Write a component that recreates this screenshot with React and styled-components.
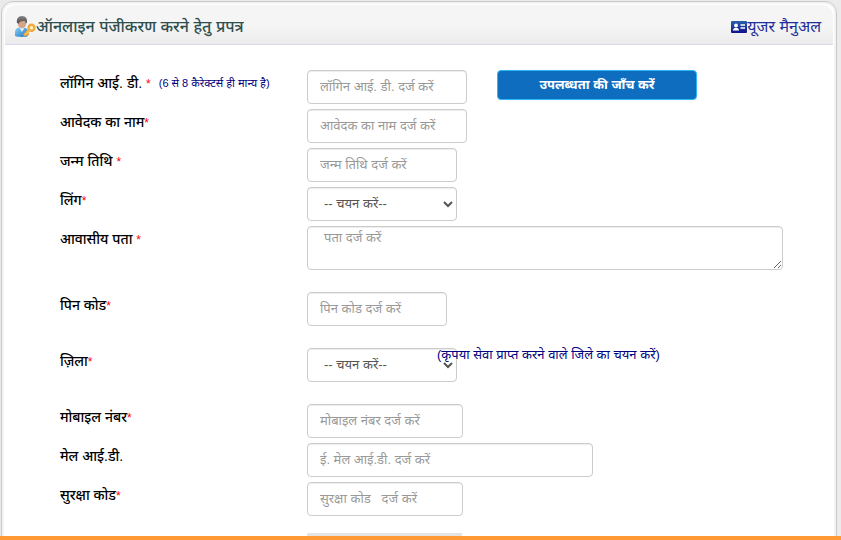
import React from "react";
import styled, { createGlobalStyle } from "styled-components";

const GlobalStyle = createGlobalStyle`
  * { box-sizing: border-box; }
  body {
    margin: 0;
    background: #ebebeb;
    color: #000;
    font-family: "Liberation Sans", "Noto Sans", "Noto Sans Devanagari", sans-serif;
    font-size: 14px;
    line-height: 20px;
  }
  input, select, textarea, button { font: inherit; }
`;

const Page = styled.div`
  display: flex;
  flex-direction: column;
  height: 100vh;
  overflow: hidden;
`;

const Viewport = styled.div`
  flex: 1;
  min-height: 0;
  overflow: hidden;
`;

const Panel = styled.main`
  margin: 1px 4px 0 1px;
  border: 1px solid #c8c8c8;
  border-radius: 12px;
  background: #fff;
  overflow: hidden;
  box-shadow: inset 0 0 0 2px #f4f4f4;
`;

const Header = styled.header`
  display: flex;
  align-items: center;
  justify-content: space-between;
  height: 40px;
  margin: 3px 3px 0;
  padding: 5px 12px 0 9px;
  border-bottom: 1px solid #d8d8ec;
  border-radius: 10px 10px 0 0;
  background: linear-gradient(#f5f5f5 50%, #ececec);
`;

const Title = styled.h1`
  display: flex;
  align-items: center;
  margin: 0;
  color: #2f4f4f;
  font-size: 16px;
  font-weight: 500;
  line-height: 24px;
`;

const ManualLink = styled.a`
  display: flex;
  align-items: center;
  color: #1f2f9c;
  font-size: 16px;
  line-height: 24px;
  text-decoration: none;
`;

const Form = styled.form`
  display: grid;
  row-gap: 5px;
  padding: 25px 50px 40px 58px;
`;

const Row = styled.div`
  display: grid;
  grid-template-columns: 247px 1fr;
  align-items: start;
  margin-bottom: ${({ $gap }) => $gap || 0}px;
`;

const Caption = styled.div`
  display: flex;
  padding-top: 3px;
  font-weight: 500;
  white-space: pre;
`;

const Star = styled.span`
  color: #f00;
  font-size: 12px;
`;

const Hint = styled.span`
  margin-left: 8px;
  color: #000080;
  font-size: 11px;
  font-weight: 400;
`;

const Controls = styled.div`
  display: flex;
  gap: 30px;
  position: relative;
`;

const field = `
  display: block;
  border: 1px solid #ccc;
  border-radius: 4px;
  background-color: #fff;
  box-shadow: inset 0 1px 1px rgba(0, 0, 0, 0.075);
  color: #555;
  &&& { font-size: 13px; }
  &::placeholder { color: #999; opacity: 1; }
`;

const Input = styled.input`
  ${field}
  width: ${({ $width }) => $width}px;
  height: 34px;
  padding: 5px 12px 7px;
`;

const Select = styled.select`
  ${field}
  width: 150px;
  height: 34px;
  padding: 5px 12px 7px;
`;

const TextArea = styled.textarea`
  ${field}
  width: 476px;
  height: 44px;
  padding: 1px 16px;
  resize: both;
`;

const CheckButton = styled.button`
  width: 200px;
  height: 30px;
  padding: 0;
  border: 1px solid #2cb8f5;
  border-radius: 4px;
  background: #0e6dbe;
  color: #fff;
  && {
    font-size: 13px;
    font-weight: 700;
  }
`;

const SelectNote = styled.span`
  position: absolute;
  left: 130px;
  top: -3px;
  color: #000080;
  font-size: 13px;
  white-space: nowrap;
  pointer-events: none;
`;

const Captcha = styled.div`
  width: 155px;
  height: 34px;
  margin: 12px 0 0 247px;
  background: #e4e4e4;
`;

const BottomBar = styled.footer`
  height: 4px;
  background: #ff9933;
`;

const UserKeyIcon = () => (
  <svg width="22" height="22" viewBox="0 0 22 22" aria-hidden="true">
    <defs>
      <linearGradient id="shirt" x2="1" y2="1">
        <stop stopColor="#8fd2f5" />
        <stop offset="1" stopColor="#1673c4" />
      </linearGradient>
      <linearGradient id="hair" y2="1" x2="0">
        <stop stopColor="#858585" />
        <stop offset="1" stopColor="#4e4a48" />
      </linearGradient>
    </defs>
    <path d="M1 20v-4c0-3 2-4.500 5-4.500h3c3 0 5 1.500 5 4.500v4c-3 1.200-10 1.200-13 0z" fill="url(#shirt)" />
    <path d="M5.500 11.500 8 16l2.500-4.500z" fill="#e8f6ff" />
    <path d="M4 5c0-2 8-2 8 0v3.500c0 2-2 3.900-4 3.900s-4-1.900-4-3.900z" fill="#d3a58a" />
    <path d="M3 7C2.300 3 4 0 8 0s5.800 3 4.800 7l-1 .5c0-2-.8-2.500-2-2.500-2 .4-4-.2-5 2.700z" fill="url(#hair)" />
    <path d="m16 13-6 6.500m2.500-2 2 1.700" fill="none" stroke="#e9a43a" strokeWidth="3" />
    <circle cx="17.500" cy="11.800" r="3" fill="#fff2c9" stroke="#efaa3d" strokeWidth="2.400" />
    <path d="m15.800 13.800-5 5.400" stroke="#ffd477" strokeWidth="1" />
  </svg>
);

const CardIcon = () => (
  <svg width="16" height="12" viewBox="0 0 16 12" aria-hidden="true">
    <defs>
      <linearGradient id="card" y2="1" x2="0">
        <stop stopColor="#2b62ad" />
        <stop offset="1" stopColor="#10128c" />
      </linearGradient>
    </defs>
    <rect width="16" height="12" rx="1" fill="url(#card)" />
    <circle cx="5" cy="4.500" r="1.900" fill="#fff" />
    <path d="M2 9.500c0-2 1.200-2.800 3-2.800s3 .8 3 2.800z" fill="#fff" />
    <path d="M9.500 4H14M9.500 7H14" stroke="#fff" strokeWidth="1.300" />
  </svg>
);

const Label = ({ htmlFor, children, star, hint }) => (
  <Caption>
    <label htmlFor={htmlFor}>
      {children}
      {star && <Star>*</Star>}
    </label>
    {hint && <Hint>{hint}</Hint>}
  </Caption>
);

const TextRow = ({ id, label, star = true, hint, placeholder, width, gap, type = "text", children }) => (
  <Row $gap={gap}>
    <Label htmlFor={id} star={star} hint={hint}>{label}</Label>
    <Controls>
      <Input id={id} type={type} placeholder={placeholder} $width={width} />
      {children}
    </Controls>
  </Row>
);

const SelectRow = ({ id, label, note, gap }) => (
  <Row $gap={gap}>
    <Label htmlFor={id} star>{label}</Label>
    <Controls>
      <Select id={id}>
        <option>-- चयन करें--</option>
      </Select>
      {note && <SelectNote>{note}</SelectNote>}
    </Controls>
  </Row>
);

export default function App() {
  return (
    <Page>
      <GlobalStyle />
      <Viewport>
        <Panel>
          <Header>
            <Title><UserKeyIcon />ऑनलाइन पंजीकरण करने हेतु प्रपत्र</Title>
            <ManualLink href="#manual"><CardIcon />यूजर मैनुअल</ManualLink>
          </Header>
          <Form>
            <TextRow id="login" label="लॉगिन आई. डी. " hint="(6 से 8 कैरेक्टर्स ही मान्य है)" placeholder="लॉगिन आई. डी. दर्ज करें" width={160}>
              <CheckButton type="button">उपलब्धता की जाँच करें</CheckButton>
            </TextRow>
            <TextRow id="name" label="आवेदक का नाम" placeholder="आवेदक का नाम दर्ज करें" width={160} />
            <TextRow id="dob" label="जन्म तिथि " placeholder="जन्म तिथि दर्ज करें" width={150} />
            <SelectRow id="gender" label="लिंग" />
            <Row $gap={17}>
              <Label htmlFor="address" star>{"आवासीय पता "}</Label>
              <TextArea id="address" placeholder="पता दर्ज करें" />
            </Row>
            <TextRow id="pin" label="पिन कोड" placeholder="पिन कोड दर्ज करें" width={140} gap={17} />
            <SelectRow id="district" label="ज़िला" note="(कृपया सेवा प्राप्त करने वाले जिले का चयन करें)" gap={17} />
            <TextRow id="mobile" label="मोबाइल नंबर" placeholder="मोबाइल नंबर दर्ज करें" width={156} />
            <TextRow id="email" type="email" star={false} label="मेल आई.डी." placeholder="ई. मेल आई.डी. दर्ज करें" width={286} />
            <TextRow id="code" label="सुरक्षा कोड" placeholder="सुरक्षा कोड   दर्ज करें" width={156} />
            <Captcha />
          </Form>
        </Panel>
      </Viewport>
      <BottomBar />
    </Page>
  );
}
